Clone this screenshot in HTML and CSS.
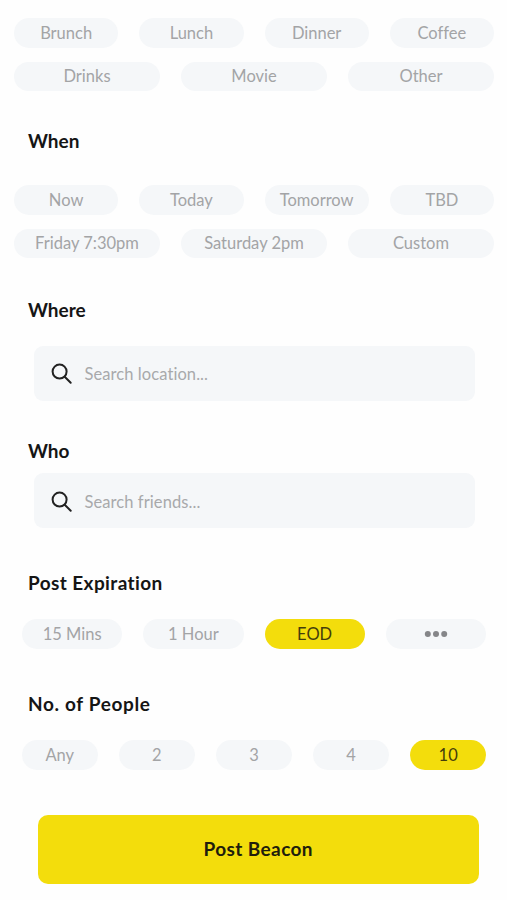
FILE: index.html
```html
<!DOCTYPE html>
<html lang="en">
<head>
<meta charset="utf-8">
<title>Post Beacon</title>
<link rel="stylesheet" href="styles.css">
</head>
<body>
<main class="form">
  <section class="what">
    <div class="row four"><span class="pill">Brunch</span><span class="pill">Lunch</span><span class="pill">Dinner</span><span class="pill">Coffee</span></div>
    <div class="row three"><span class="pill">Drinks</span><span class="pill">Movie</span><span class="pill">Other</span></div>
  </section>
  <section class="when">
    <h2>When</h2>
    <div class="row four"><span class="pill">Now</span><span class="pill">Today</span><span class="pill">Tomorrow</span><span class="pill">TBD</span></div>
    <div class="row three"><span class="pill">Friday 7:30pm</span><span class="pill">Saturday 2pm</span><span class="pill">Custom</span></div>
  </section>
  <section class="where">
    <h2>Where</h2>
    <div class="search">
      <svg width="22" height="22" viewBox="0 0 22 22"><circle cx="8.6" cy="8.6" r="7"/><path d="M13.7 13.7l6 6"/></svg>
      <span class="hint">Search location...</span>
    </div>
  </section>
  <section class="who">
    <h2>Who</h2>
    <div class="search">
      <svg width="22" height="22" viewBox="0 0 22 22"><circle cx="8.6" cy="8.6" r="7"/><path d="M13.7 13.7l6 6"/></svg>
      <span class="hint">Search friends...</span>
    </div>
  </section>
  <section class="expiration">
    <h2>Post Expiration</h2>
    <div class="row four"><span class="pill">15 Mins</span><span class="pill">1 Hour</span><span class="pill on">EOD</span><span class="pill"><svg class="dots" width="24" height="8" viewBox="0 0 24 8"><circle cx="3.8" cy="4" r="3"/><circle cx="12" cy="4" r="3"/><circle cx="20.2" cy="4" r="3"/></svg></span></div>
  </section>
  <section class="people">
    <h2>No. of People</h2>
    <div class="row five"><span class="pill">Any</span><span class="pill">2</span><span class="pill">3</span><span class="pill">4</span><span class="pill on">10</span></div>
  </section>
  <button class="post">Post Beacon</button>
</main>
</body>
</html>
```
FILE: styles.css
```css
* { box-sizing: border-box; }
body {
  margin: 0;
  background: #fefefe;
  font-family: Lato, "Liberation Sans", sans-serif;
  font-variant-ligatures: none;
  color: #151515;
}
.form {
  height: 900px;
  padding: 18px 13px 0 14px;
  display: flex;
  flex-direction: column;
}
h2 {
  margin: 0 0 0 14px;
  font-size: 19px;
  line-height: 24px;
  font-weight: 700;
}
.row { display: grid; column-gap: 21px; }
.four { grid-template-columns: repeat(4, 1fr); }
.three { grid-template-columns: repeat(3, 1fr); }
.five { grid-template-columns: repeat(5, 1fr); column-gap: 21.5px; }
.row + .row { margin-top: 14px; }
.pill {
  height: 29.5px;
  border-radius: 15px;
  background: #f5f7f9;
  color: #a3a4a6;
  font-size: 16.5px;
  line-height: 30px;
  display: flex;
  align-items: center;
  justify-content: center;
  white-space: nowrap;
}
.pill.on { background: #f3dd0c; color: #453d0b; }
.when { margin-top: 38px; }
.when h2 { margin-bottom: 32px; }
.where { margin-top: 39.5px; }
.where h2 { margin-bottom: 24px; }
.who { margin-top: 38.5px; }
.who h2 { margin-bottom: 10px; }
.search {
  margin: 0 19.5px;
  height: 55px;
  border-radius: 9px;
  background: #f5f7f9;
  display: flex;
  align-items: center;
  padding: 2px 0 0 17px;
}
.search svg { fill: none; stroke: #222; stroke-width: 2; stroke-linecap: round; }
.hint { margin-left: 12px; font-size: 16.5px; line-height: 24px; color: #a8a9ab; letter-spacing: 0.08px; }
.expiration { margin-top: 43px; }
.expiration h2, .people h2 { margin-bottom: 24px; }
.expiration h2 { letter-spacing: 0.4px; }
.people h2 { letter-spacing: 0.65px; }
.expiration .row, .people .row { margin-left: 8px; margin-right: 8px; }
.people { margin-top: 43.5px; }
.dots { fill: #858689; }
.post {
  margin: 45px 15px 0 23.5px;
  height: 69px;
  padding: 0;
  border: 0;
  border-radius: 10px;
  background: #f3dd0c;
  color: #211d0c;
  font: 700 19px/24px Lato, "Liberation Sans", sans-serif;
  letter-spacing: 0.4px;
}
```
